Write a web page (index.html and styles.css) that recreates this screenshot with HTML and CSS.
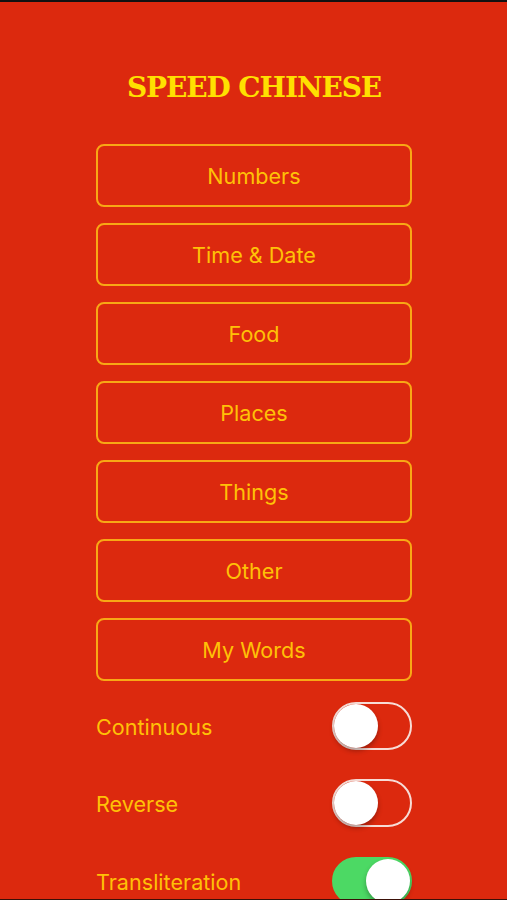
FILE: index.html
```html
<!DOCTYPE html>
<html lang="en">
<head>
    <meta charset="UTF-8">
    <meta name="viewport" content="width=device-width, initial-scale=1.0">
    <title>Speed Chinese</title>
    <link rel="stylesheet" href="styles.css">
</head>
<body>
    <div class="screen">
        <h1 class="title">SPEED CHINESE</h1>
        <div class="menu">
            <button type="button" class="menu-button">Numbers</button>
            <button type="button" class="menu-button">Time &amp; Date</button>
            <button type="button" class="menu-button">Food</button>
            <button type="button" class="menu-button">Places</button>
            <button type="button" class="menu-button">Things</button>
            <button type="button" class="menu-button">Other</button>
            <button type="button" class="menu-button">My Words</button>
        </div>
        <div class="options">
            <div class="option">
                <span class="option-label">Continuous</span>
                <span class="switch"><span class="knob"></span></span>
            </div>
            <div class="option">
                <span class="option-label">Reverse</span>
                <span class="switch"><span class="knob"></span></span>
            </div>
            <div class="option">
                <span class="option-label">Transliteration</span>
                <span class="switch on"><span class="knob"></span></span>
            </div>
        </div>
    </div>
</body>
</html>
```

FILE: styles.css
```css
html, body {
    height: 100%;
}

body {
    margin: 0;
    overflow: hidden;
    background-color: #dc290e;
    font-family: 'Inter', 'Roboto', sans-serif;
}

.screen {
    height: 900px;
    box-sizing: border-box;
    padding: 0 95px 0 96px;
    border-top: 2px solid #111;
    border-bottom: 1px solid #3a1008;
    overflow: hidden;
    color: #ffc107;
}

.title {
    margin: 68px 0 0;
    height: 36px;
    line-height: 36px;
    font-family: 'DejaVu Serif', serif;
    font-size: 28px;
    font-weight: 700;
    letter-spacing: -1.1px;
    text-align: center;
    white-space: nowrap;
    color: #ffe000;
}

.menu {
    display: flex;
    flex-direction: column;
    gap: 16px;
    margin-top: 38px;
}

.menu-button {
    height: 63px;
    padding: 0;
    border: 2px solid #f8a815;
    border-radius: 8px;
    background: none;
    color: #ffc107;
    font-family: inherit;
    font-size: 21.6px;
}

.options {
    display: flex;
    flex-direction: column;
    gap: 29.4px;
    margin-top: 21px;
}

.option {
    display: flex;
    justify-content: space-between;
    align-items: center;
    height: 48px;
    font-size: 21.6px;
}

.option-label {
    padding-top: 2px;
}

.switch {
    display: flex;
    width: 80px;
    height: 48px;
    box-sizing: border-box;
    padding: 2px;
    border: 2px solid #f7dcd6;
    border-radius: 24px;
}

.switch.on {
    justify-content: flex-end;
    border-color: #4cd964;
    background-color: #4cd964;
}

.knob {
    width: 44px;
    height: 44px;
    margin: -2px 0 0 -2px;
    border-radius: 50%;
    background-color: #fff;
    box-shadow: 0 3px 5px rgba(0, 0, 0, 0.3);
}

.switch.on .knob {
    margin: -2px -2px 0 0;
}
```
